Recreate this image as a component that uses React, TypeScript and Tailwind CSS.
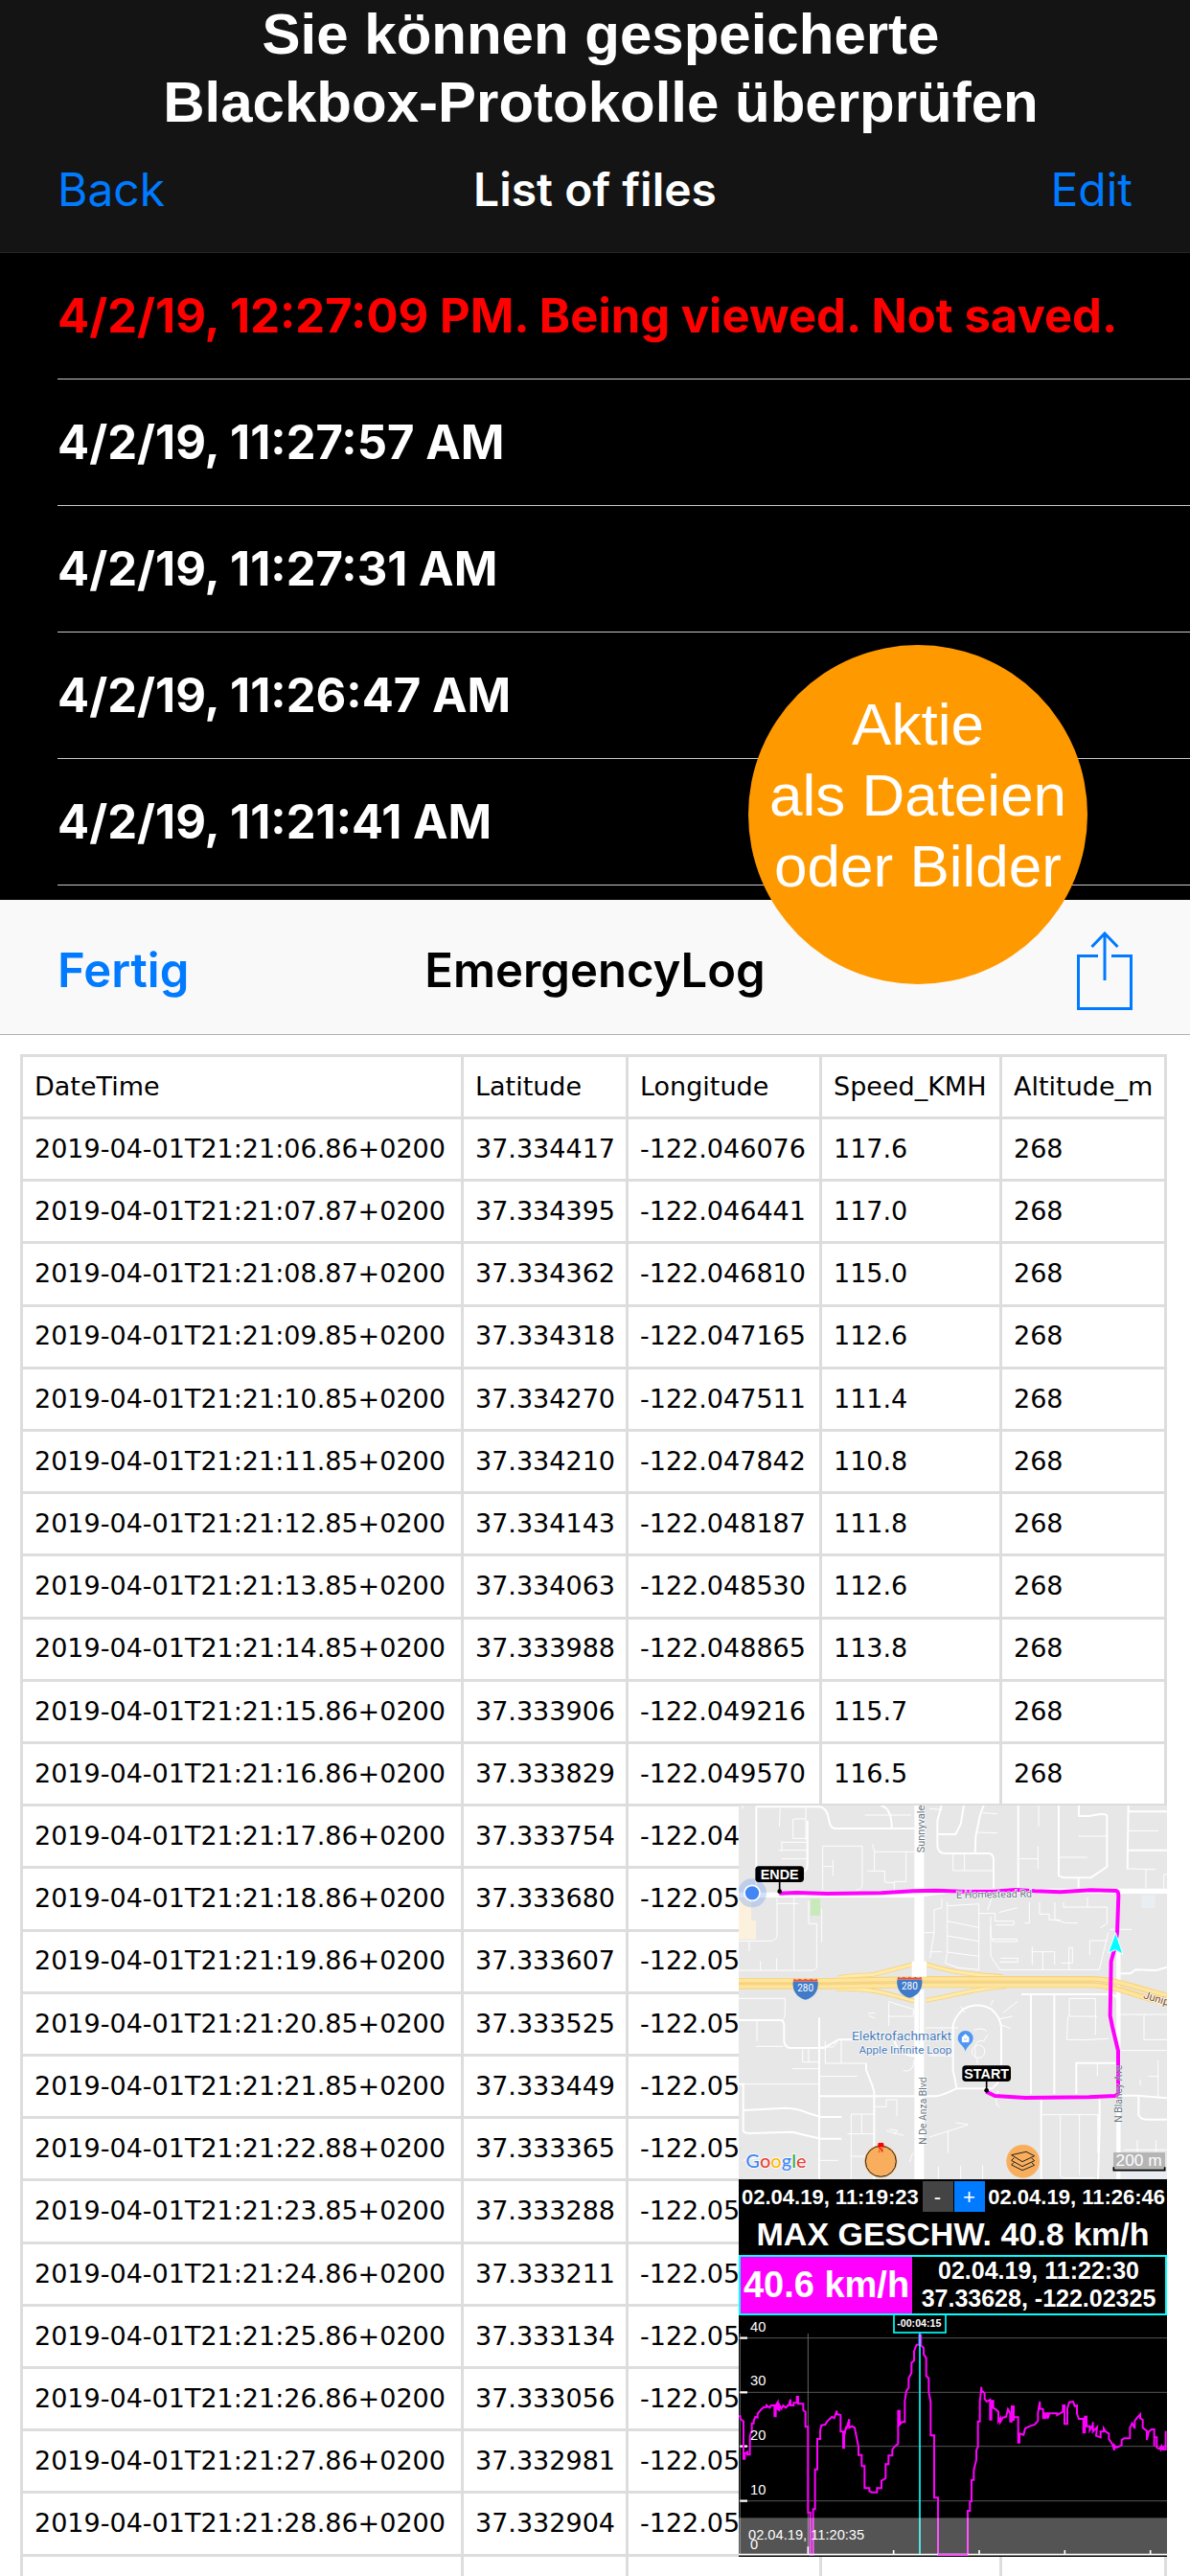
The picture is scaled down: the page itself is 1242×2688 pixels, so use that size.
const SAVED_FILES = [
  "4/2/19, 11:27:57 AM",
  "4/2/19, 11:27:31 AM",
  "4/2/19, 11:26:47 AM",
  "4/2/19, 11:21:41 AM",
];

const COLUMNS = ["DateTime", "Latitude", "Longitude", "Speed_KMH", "Altitude_m"];

const LOG = [
  ["2019-04-01T21:21:06.86+0200", "37.334417", "-122.046076", "117.6", "268"],
  ["2019-04-01T21:21:07.87+0200", "37.334395", "-122.046441", "117.0", "268"],
  ["2019-04-01T21:21:08.87+0200", "37.334362", "-122.046810", "115.0", "268"],
  ["2019-04-01T21:21:09.85+0200", "37.334318", "-122.047165", "112.6", "268"],
  ["2019-04-01T21:21:10.85+0200", "37.334270", "-122.047511", "111.4", "268"],
  ["2019-04-01T21:21:11.85+0200", "37.334210", "-122.047842", "110.8", "268"],
  ["2019-04-01T21:21:12.85+0200", "37.334143", "-122.048187", "111.8", "268"],
  ["2019-04-01T21:21:13.85+0200", "37.334063", "-122.048530", "112.6", "268"],
  ["2019-04-01T21:21:14.85+0200", "37.333988", "-122.048865", "113.8", "268"],
  ["2019-04-01T21:21:15.86+0200", "37.333906", "-122.049216", "115.7", "268"],
  ["2019-04-01T21:21:16.86+0200", "37.333829", "-122.049570", "116.5", "268"],
  ["2019-04-01T21:21:17.86+0200", "37.333754", "-122.04", "", ""],
  ["2019-04-01T21:21:18.86+0200", "37.333680", "-122.05", "", ""],
  ["2019-04-01T21:21:19.86+0200", "37.333607", "-122.05", "", ""],
  ["2019-04-01T21:21:20.85+0200", "37.333525", "-122.05", "", ""],
  ["2019-04-01T21:21:21.85+0200", "37.333449", "-122.05", "", ""],
  ["2019-04-01T21:21:22.88+0200", "37.333365", "-122.05", "", ""],
  ["2019-04-01T21:21:23.85+0200", "37.333288", "-122.05", "", ""],
  ["2019-04-01T21:21:24.86+0200", "37.333211", "-122.05", "", ""],
  ["2019-04-01T21:21:25.86+0200", "37.333134", "-122.05", "", ""],
  ["2019-04-01T21:21:26.86+0200", "37.333056", "-122.05", "", ""],
  ["2019-04-01T21:21:27.86+0200", "37.332981", "-122.05", "", ""],
  ["2019-04-01T21:21:28.86+0200", "37.332904", "-122.05", "", ""],
  ["", "", "", "", ""],
];

function ShareIcon() {
  return (
    <svg viewBox="0 0 58 82" className="h-[82px] w-[58px]" fill="none" stroke="currentColor" strokeWidth="3">
      <path d="M22 25.5H1.5V80.5H56.5V25.5H36M29 2V51M15.500 16L29 2L42.500 16" />
    </svg>
  );
}

function Shield({ x, y }: { x: number; y: number }) {
  return (
    <g transform={`translate(${x} ${y})`}>
      <path d="M-39 -18H39C42 8 28 32 0 38C-28 32 -42 8 -39 -18Z" fill="#3f7bc8" />
      <path d="M-36 -28Q-27 -22 -18 -28Q-9 -22 0 -28Q9 -22 18 -28Q27 -22 36 -28L39 -19H-39Z" fill="#d9534f" />
      <text y="12" textAnchor="middle" fontSize="30" fill="#fff" className="font-[Roboto,sans-serif]">
        280
      </text>
    </g>
  );
}

function Flag({ x, y, label, pinX, pinY }: { x: number; y: number; label: string; pinX: number; pinY: number }) {
  return (
    <g>
      <path d={`M${pinX} ${y + 40}V${pinY}`} stroke="#000" strokeWidth="5" />
      <circle cx={pinX} cy={pinY} r="7" />
      <rect x={x} y={y} width="152" height="50" rx="11" />
      <text x={x + 76} y={y + 41} textAnchor="middle" fontSize="43" fontWeight="700" fill="#fff">
        {label}
      </text>
    </g>
  );
}

function RouteMap() {
  return (
    <svg
      viewBox="33 42 1341 1170"
      preserveAspectRatio="xMidYMid slice"
      className="block h-[390px] w-full bg-[#e7e7e7] font-['Liberation_Sans',Arial,sans-serif] font-normal"
    >
      {/* parks and buildings */}
      <path d="M33 325H72V402H87V461H33Z" fill="#fcf1dc" />
      <rect x="258" y="334" width="30" height="53" fill="#c8eabb" />
      <rect x="1294" y="322" width="43" height="41" fill="#e9eef3" />
      <rect x="1230" y="1182" width="144" height="30" fill="#e9ecf1" />

      {/* minor roads */}
      <g fill="none" stroke="#fff" strokeWidth="3">
        <path d="M45 42V52M163 50L160 108M243 48V148M205 84H243M203 84V145H248M168 155V185M168 157H248M158 182H250M166 209H248" />
        <path d="M296 307V169H420V290Q420 306 400 307M298 233H328M328 212V262M452 164L458 187H583M458 187V247M436 247H490V282L520 284M557 188V280H520V310" />
        <path d="M428 72H572M630 52L670 55M798 65L843 68M781 126L843 128M704 195V246H829M740 194V246M911 209H970M970 170V240M972 42V108M1038 204H1124M1097 138H1187M1253 121H1347M1251 240L1338 242M1308 242V300M1374 258H1364V305" />
        <path d="M153 332V450Q150 466 130 466H33M153 349H220M206 330V555M252 340V412H277V548Q275 558 258 558H33M66 466V498M101 530V558M152 521V558M293 365V470" />
        <path d="M669 334V363L645 368V440H614M645 440L632 520M632 500H670M686 345V505L680 535L720 550L785 556V350M686 356L785 350M686 404L785 424M686 450L785 467M686 501L785 514M786 380H836V404H895V416H838M824 335L812 370M822 390V450L830 468H905V460H826M848 377L905 362M943 345V410H928M975 345V382H1005V400H1040M1023 345V400L1060 410H1095M1050 345V360H1186V412L1165 425M1125 330V360M1195 430H1263M1190 440L1162 556H850L822 514V420M853 520H907V532H850M952 484V540M985 498V556M952 500H1022V540M1067 556V487H1078V535H1042M1132 510V465H1187" />
        <path d="M438 692H460M440 700L460 708M500 655L580 680V700M503 660V732M500 702H580M90 715V780M33 646H178V690Q178 712 165 716M88 796H172M304 780V849H434M354 775V849M287 798H330L345 775M201 866H287M33 914H287M287 890H404M233 805V845H287M252 805V845M548 872Q580 880 582 840" />
        <path d="M617 738H720M630 825H705M770 745Q800 735 810 750M775 830Q765 770 800 780M862 690L906 655M850 710L890 702M850 727L885 740M728 670L740 690M830 650L822 668M783 792A20 20 0 1 0 784 792M750 760L770 780M800 780L812 760M780 832V850M845 935Q830 980 850 985" />
        <path d="M1068 648V702H1155M1068 646H1150V760M1064 702L1060 775H1100L1110 776L1190 772M1220 696H1374M1302 698V775H1374M1228 809H1374M1156 848V890M1316 890H1347M1346 840V960M1290 918V900M1281 1090V1125M1340 1090V1125M1240 1120H1374M712 1035L750 1040M630 1080L750 1042M688 1060V1130" />
        <path d="M385 1212V1008H455M373 1070H455M385 1140H455M418 1008V1070M460 985H495V963H528V1015M495 1060L550 1075M505 1055L530 1060L520 1072M288 1153H345M47 1153L100 1143M568 1158Q575 1130 581 1130M658 1172V1212M728 1170V1212M797 1168V1212M984 1010H1164M1040 1012V1200Q1040 1208 1060 1208H1150M1100 1010V1200M1158 1010V1130Z" />
      </g>

      {/* side streets */}
      <g fill="none" stroke="#fff" strokeWidth="6" strokeLinejoin="round">
        <path d="M88 45V320M88 46H285Q310 48 316 90Q320 114 335 114H583M248 90V225Q248 247 238 247M478 42Q512 50 512 112M668 42L655 90V170Q658 193 680 192H818Q831 194 831 215V303M658 132H712L728 100L738 42M800 42L788 75L775 140L773 190M908 42V300M1035 42V262L1050 268H1135L1186 234V75Q1184 66 1160 70L1130 75H1098V42M1253 42L1250 242M1253 61H1374M1253 182H1374M1097 268V305" />
        <path d="M33 714H165Q176 716 175 735V780Q178 800 195 801H300L345 775H395M33 914H47V1060Q50 1068 70 1068L200 1064L290 1085H355M50 996L180 989Q220 990 250 1005L290 1017H355M285 706V1212M285 952H650Q670 950 715 928H830M432 850V870L450 915L457 940V1212" />
        <path d="M715 925L704 870V735Q705 710 735 680Q780 655 825 680Q852 705 855 735V880Q853 905 830 925M520 780Q540 830 590 825" />
        <path d="M918 633H1195Q1220 635 1222 660V760M948 635V945M1021 635V945M980 960V1212M1163 960V1060L1158 1212M1090 945V848H1220M1222 950H1280L1374 958M1285 950V1010Q1290 1025 1310 1025H1374M1218 545L1225 568H1260L1275 556L1340 558L1374 548" />
      </g>
      <path d="M1222 500V1212" stroke="#fff" strokeWidth="13" />
      <path d="M33 322H590L680 310H1374" fill="none" stroke="#fff" strokeWidth="16" />

      {/* boulevard and motorway */}
      <path d="M598 42V570" stroke="#fff" strokeWidth="30" />
      <g fill="none" strokeLinejoin="round">
        <path d="M345 582C380 572 420 576 460 570L585 538M615 538C690 560 740 570 860 578M340 616C440 612 500 630 585 655M620 652C700 640 760 615 870 608" stroke="#f5d27e" strokeWidth="14" />
        <path d="M345 582C380 572 420 576 460 570L585 538M615 538C690 560 740 570 860 578M340 616C440 612 500 630 585 655M620 652C700 640 760 615 870 608" stroke="#ffebaa" strokeWidth="9" />
        <path d="M33 591L300 591L600 585H1140C1220 586 1290 618 1374 638" stroke="#f5d27e" strokeWidth="18" />
        <path d="M33 608H300L600 604H1140C1210 606 1270 635 1330 650L1374 660" stroke="#f5d27e" strokeWidth="18" />
        <path d="M33 590L300 590L600 585H1140C1220 586 1290 618 1374 636" stroke="#ffe49b" strokeWidth="11" />
        <path d="M33 609H300L600 605H1140C1210 607 1270 635 1330 652L1374 662" stroke="#ffe49b" strokeWidth="11" />
      </g>
      <path d="M598 618V1212M590 530V578M606 530V578" stroke="#fff" strokeWidth="30" />
      <path d="M598 624V790" stroke="#ededed" strokeWidth="3" />
      <Shield x={242} y={612} />
      <Shield x={568} y={606} />

      {/* recorded route */}
      <path
        d="M160 317L215 315L310 318L480 316L580 310L650 308L740 311L830 311L900 306L960 310L1040 313L1135 307L1215 309Q1222 310 1222 325L1218 440L1210 490L1199 530L1196 700L1203 735L1221 810V945L1212 951L1130 955L930 957L835 951L808 938"
        fill="none"
        stroke="#f0f"
        strokeWidth="12"
        strokeLinejoin="round"
      />
      <path d="M1213 440L1236 508L1213 494L1190 503Z" fill="#0ff" stroke="#fff" strokeWidth="3" />

      {/* map labels */}
      <g className="font-[Roboto,sans-serif]" fill="#66757f" stroke="#fff" strokeWidth="4" paintOrder="stroke">
        <text x="714" y="333" fontSize="32" transform="rotate(-1 714 333)">E Homestead Rd</text>
        <text transform="translate(616 190) rotate(-90)" fontSize="33">Sunnyvale</text>
        <text transform="translate(620 1103) rotate(-90)" fontSize="31">N De Anza Blvd</text>
        <text transform="translate(1232 1034) rotate(-90)" fontSize="31" strokeWidth="1">N Blaney Ave</text>
        <text transform="translate(1298 645) rotate(17)" fontSize="34" fill="#7a4a1c">Junip</text>
        <g fill="#4a7ab8" textAnchor="end">
          <text x="700" y="777" fontSize="41">Elektrofachmarkt</text>
          <text x="700" y="820" fontSize="35">Apple Infinite Loop</text>
        </g>
      </g>
      <path d="M743 812C740 795 719 788 719 771A24 24 0 0 1 767 771C767 788 746 795 743 812Z" fill="#4e96f3" />
      <path d="M733 767H753V782H733ZM737 767V764Q743 754 749 764V767" fill="#fff" stroke="#fff" strokeWidth="3" />
      <path d="M738 772Q743 779 748 772" fill="none" stroke="#4e96f3" strokeWidth="2" />

      <circle cx="75" cy="316" r="45" fill="#4285f4" opacity=".25" />
      <circle cx="75" cy="316" r="24" fill="#4285f4" stroke="#fff" strokeWidth="5" />
      <Flag x={85} y={232} label="ENDE" pinX={161} pinY={311} />
      <Flag x={733} y={856} label="START" pinX={809} pinY={934} />

      {/* compass */}
      <circle cx="478" cy="1156" r="51" fill="#f8ae5c" />
      <circle cx="478" cy="1156" r="48" fill="none" stroke="#222" strokeWidth="3" />
      <path d="M468 1109L470 1098H486L488 1109Z" fill="red" />
      <text x="478" y="1128" textAnchor="middle" fontSize="22" fontWeight="700" fill="red" className="font-['Liberation_Serif',serif]">
        N
      </text>

      {/* layer switch */}
      <circle cx="923" cy="1156" r="52" fill="#f8ae5c" />
      <path
        d="M887 1136L933 1126L959 1139L921 1157ZM895 1145L887 1153L921 1172L959 1154L950 1146M895 1159L887 1167L921 1184L959 1168L950 1160"
        fill="none"
        stroke="#222"
        strokeWidth="3"
      />

      {/* map provider and scale */}
      <text x="55" y="1177" fontSize="60" fontWeight="500" stroke="#fff" strokeWidth="5" paintOrder="stroke" className="font-[Lato,sans-serif]">
        <tspan fill="#4285f4">G</tspan>
        <tspan fill="#ea4335">o</tspan>
        <tspan fill="#fbbc05">o</tspan>
        <tspan fill="#4285f4">g</tspan>
        <tspan fill="#34a853">l</tspan>
        <tspan fill="#ea4335">e</tspan>
      </text>
      <rect x="1206" y="1128" width="162" height="55" fill="#b5b5b5" />
      <path d="M1207 1174V1184H1367V1174" fill="none" stroke="#000" strokeWidth="5" />
      <text x="1286" y="1171" textAnchor="middle" fontSize="52" fill="#fff">200 m</text>
    </svg>
  );
}

const SPEED_PATH =
  "M33 364H38V372L48 380V497H52V480L60 476V484H68V425L74 408V386H80V378L85 366L92 368V356L104 342L112 335H120V330L130 337L134 330H145V364H149V330L155 320V342L160 345V328L167 340L172 330L180 337L190 328L195 311V330H205V322H215V303H219V325H235V345L242 350V397H250V665H257V797H266V655H272V530H279V435H288V408L292 392L304 390L310 380L318 372L325 366L332 370L340 347V357L352 360V412H360V463H363V425L370 395V405L379 373V400L388 395L396 400L402 430L408 460V485H418V520H427V589H442V598L450 602H466V589H480V566L493 558V514H502V487H514V468L522 458L532 450V347H537V390L544 382H553V316L558 285L565 275V245L574 228V196L582 190V160L590 140H598V110H604V142L612 150V170L620 182V238L628 245V288L634 320V424H645V619H657V797H750V660H757V630H762V563H769V533L777 500V470L782 460V380H788V320L793 272V283L803 292V310L810 318L820 312V374H824V316H830V338L838 342L846 350V380L852 370V382L860 368L870 366L876 342L883 355V380H888V333H894V378V367H908V446H912V418L925 422L930 402L945 395L960 390L970 378V352L976 318V340L986 342V372L992 352V372L1000 352V372L1006 355H1030V360L1048 350V330H1053V388H1062V340L1068 320L1080 318L1085 332L1092 330V356L1098 372H1112V415H1117V365H1122V395H1132V408L1142 390V382V412L1155 398L1152 425L1166 430V412H1176V402L1182 412L1192 418V435L1202 450L1209 470V455L1215 462L1232 455V438L1240 433H1258V400L1265 386L1273 402V378L1283 366L1290 358V370L1298 375V400L1311 410V438L1317 412L1326 405H1334V420V458V430H1342V462L1350 466L1356 458V468L1363 460V468H1370V410";

function SpeedChart() {
  return (
    <svg
      viewBox="33 48 1341 756"
      preserveAspectRatio="none"
      className="block h-[252px] w-full font-['Liberation_Sans',Arial,sans-serif] font-normal"
    >
      <path d="M33 119H1374M33 289H1374M33 458H1374M33 629H1374" stroke="#555" strokeWidth="3" />
      <path d="M250 105V797M37 105V797" stroke="#666" strokeWidth="3" />
      <path d="M37 119H60M37 289H60M37 458H60M37 629H60" stroke="#fff" strokeWidth="7" />
      <path d={SPEED_PATH} fill="none" stroke="#f0f" strokeWidth="6" />
      <path d="M600 103V798" stroke="#0ff" strokeWidth="5" />
      <rect x="33" y="682" width="1341" height="114" fill="#fff" fillOpacity=".33" />
      <path d="M33 797H1374M518 783V797M786 783V797M1054 783V797M1322 783V797M250 772V797" stroke="#fff" strokeWidth="5" />
      <path d="M657 797H750" stroke="#ff4dff" strokeWidth="5" />
      <g fill="#fff" fontSize="44">
        <text x="69" y="99">40</text>
        <text x="69" y="268">30</text>
        <text x="69" y="438">20</text>
        <text x="69" y="609">10</text>
        <text x="69" y="779">0</text>
        <text x="63" y="750">02.04.19, 11:20:35</text>
      </g>
      <rect x="519" y="40" width="162" height="62" fill="#000" stroke="#0ff" strokeWidth="5" />
      <text x="598" y="84" textAnchor="middle" fontSize="32" fontWeight="700" fill="#fff">
        -00:04:15
      </text>
    </svg>
  );
}

function TripPanel() {
  return (
    <aside className="absolute bottom-5 right-6 w-[447px] bg-black font-['Liberation_Sans',Arial,sans-serif] font-bold text-white">
      <RouteMap />
      <div className="flex h-9 items-center justify-between pl-[3px] pr-[2px] text-[22px]">
        <span>02.04.19, 11:19:23</span>
        <div className="flex gap-px font-normal">
          <button type="button" aria-label="Verkleinern" className="h-8 w-8 bg-[#444]">-</button>
          <button type="button" aria-label="Vergrößern" className="h-8 w-8 bg-[#007aff]">+</button>
        </div>
        <span>02.04.19, 11:26:46</span>
      </div>
      <p className="text-center text-[34px] leading-[43px]">MAX GESCHW. 40.8 km/h</p>
      <div className="flex h-[63px] border-2 border-[#00ffff]">
        <div className="flex w-[179px] items-center justify-center bg-[#ff00ff] text-[38px]">40.6 km/h</div>
        <div className="flex-1 text-center text-[25px] leading-[29px]">
          <p>02.04.19, 11:22:30</p>
          <p>37.33628, -122.02325</p>
        </div>
      </div>
      <SpeedChart />
    </aside>
  );
}

export default function App() {
  return (
    <main className="relative flex h-screen flex-col overflow-hidden bg-white font-[Inter,sans-serif]">
      <header className="border-b border-[#262626] bg-[#141414] pb-[9px] text-white">
        <h1 className="pl-3 text-center font-['Liberation_Sans',Arial,sans-serif] text-[60px] font-bold leading-[71px]">
          Sie können gespeicherte
          <br />
          Blackbox-Protokolle überprüfen
        </h1>
        <nav className="grid h-28 grid-cols-3 items-center px-[60px] text-[48px]">
          <button type="button" className="justify-self-start text-[#007aff]">Back</button>
          <h2 className="justify-self-center whitespace-nowrap font-semibold">List of files</h2>
          <button type="button" className="justify-self-end text-[#007aff]">Edit</button>
        </nav>
      </header>

      <section className="relative bg-black pb-[15px] pl-[60px] text-[49px] font-bold text-white">
        <ul>
          <li className="flex h-[132px] items-center whitespace-nowrap border-b border-[#c8c7cc] text-[#ff0000]">
            4/2/19, 12:27:09 PM. Being viewed. Not saved.
          </li>
          {SAVED_FILES.map((file) => (
            <li key={file} className="flex h-[132px] items-center border-b border-[#c8c7cc]">
              {file}
            </li>
          ))}
        </ul>
        <div className="absolute -bottom-[88px] right-[107px] z-10 flex size-[354px] flex-col items-center justify-center rounded-full bg-[#ff9900] pb-10 text-center font-['Liberation_Sans',Arial,sans-serif] text-[62px] font-normal leading-[74px]">
          <p>Aktie</p>
          <p>als Dateien</p>
          <p>oder Bilder</p>
        </div>
      </section>

      <nav className="grid h-[141px] shrink-0 grid-cols-3 items-center border-b border-[#b2b2b2] bg-[#f9f9f9] px-[60px] pt-2 text-[49px] font-semibold">
        <button type="button" className="justify-self-start text-[#007aff]">Fertig</button>
        <h2 className="justify-self-center text-black">EmergencyLog</h2>
        <button type="button" aria-label="Teilen" className="justify-self-end text-[#007aff]">
          <ShareIcon />
        </button>
      </nav>

      <section className="pl-[21px] pr-6 pt-5">
        <table className="h-[1633px] w-full table-fixed border-collapse font-['DejaVu_Sans',Verdana,sans-serif] text-[27px] text-black">
          <colgroup>
            <col className="w-[460px]" />
            <col className="w-[172px]" />
            <col className="w-[202px]" />
            <col className="w-[188px]" />
            <col />
          </colgroup>
          <thead>
            <tr>
              {COLUMNS.map((column) => (
                <th key={column} className="h-[65px] border-3 border-[#dddddd] px-3 text-left font-normal">
                  {column}
                </th>
              ))}
            </tr>
          </thead>
          <tbody>
            {LOG.map((row, i) => (
              <tr key={i}>
                {row.map((cell, j) => (
                  <td key={j} className="h-[65px] whitespace-nowrap border-3 border-[#dddddd] px-3">
                    {cell}
                  </td>
                ))}
              </tr>
            ))}
          </tbody>
        </table>
      </section>

      <TripPanel />
    </main>
  );
}
